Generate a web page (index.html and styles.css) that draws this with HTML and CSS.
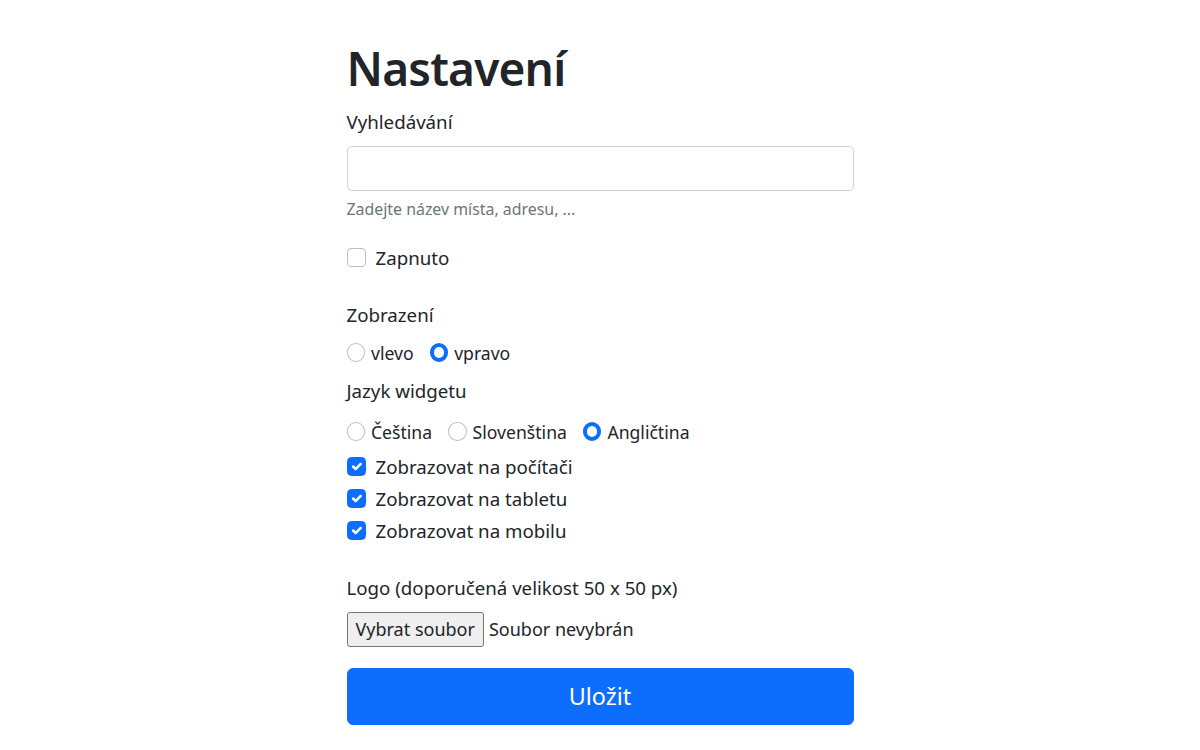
FILE: index.html
```html
<!DOCTYPE html>
<html lang="cs">
<head>
  <meta charset="utf-8">
  <title>Nastavení</title>
  <link rel="stylesheet" href="styles.css">
</head>
<body>
  <div class="container">
    <h1>Nastavení</h1>

    <form class="settings">
      <div class="search">
        <label class="form-label" for="search-input">Vyhledávání</label>
        <input class="form-control" type="text" id="search-input">
        <div class="form-text">Zadejte název místa, adresu, ...</div>
      </div>

      <div class="check-row enabled">
        <span class="check-box"></span>
        <span class="check-label">Zapnuto</span>
      </div>

      <div class="form-label display-label">Zobrazení</div>
      <div class="radio-row">
        <span class="radio-item"><span class="radio"></span>vlevo</span>
        <span class="radio-item"><span class="radio checked"></span>vpravo</span>
      </div>

      <div class="form-label lang-label">Jazyk widgetu</div>
      <div class="radio-row lang-row">
        <span class="radio-item"><span class="radio"></span>Čeština</span>
        <span class="radio-item"><span class="radio"></span>Slovenština</span>
        <span class="radio-item"><span class="radio checked"></span>Angličtina</span>
      </div>

      <div class="devices">
        <div class="check-row">
          <span class="check-box checked">
            <svg viewBox="0 0 20 20"><path d="M6 10l3 3l6-6"/></svg>
          </span>
          <span class="check-label">Zobrazovat na počítači</span>
        </div>
        <div class="check-row">
          <span class="check-box checked">
            <svg viewBox="0 0 20 20"><path d="M6 10l3 3l6-6"/></svg>
          </span>
          <span class="check-label">Zobrazovat na tabletu</span>
        </div>
        <div class="check-row">
          <span class="check-box checked">
            <svg viewBox="0 0 20 20"><path d="M6 10l3 3l6-6"/></svg>
          </span>
          <span class="check-label">Zobrazovat na mobilu</span>
        </div>
      </div>

      <div class="form-label logo-label">Logo (doporučená velikost 50 x 50 px)</div>
      <div class="file-row">
        <button type="button" class="file-button">Vybrat soubor</button>
        <span class="file-name">Soubor nevybrán</span>
      </div>

      <button type="button" class="btn-save">Uložit</button>
    </form>
  </div>
</body>
</html>
```

FILE: styles.css
```css
body {
  margin: 0;
  font-family: "Segoe UI", "Noto Sans", sans-serif;
  font-size: 18.7px;
  line-height: 28px;
  color: #212529;
  background-color: #fff;
}

.container {
  width: 507px;
  margin: 0 auto;
  padding-top: 40px;
}

h1 {
  font-size: 46px;
  font-weight: 600;
  letter-spacing: -0.8px;
  line-height: 56px;
  margin: 0 0 12px;
}

.form-label {
  display: block;
  margin-bottom: 10px;
}

.form-control {
  display: block;
  box-sizing: border-box;
  width: 100%;
  height: 45px;
  padding: 7px 14px;
  font: inherit;
  border: 1px solid #ced4da;
  border-radius: 5px;
  margin: 0;
}

.form-text {
  margin-top: 6px;
  font-size: 15.9px;
  line-height: 24.6px;
  color: #6c757d;
}

/* checkboxes */

.check-row {
  display: flex;
  align-items: center;
  gap: 10px;
  margin-bottom: 4px;
}

.check-row.enabled {
  margin-top: 22px;
  margin-bottom: 0;
}

.check-box {
  flex: none;
  box-sizing: border-box;
  width: 19px;
  height: 19px;
  border: 1px solid rgba(0, 0, 0, 0.25);
  border-radius: 4.5px;
  background-color: #fff;
}

.check-box.checked {
  background-color: #0d6efd;
  border-color: #0d6efd;
}

.check-box svg {
  display: block;
  width: 100%;
  height: 100%;
  fill: none;
  stroke: #fff;
  stroke-width: 3;
  stroke-linecap: round;
  stroke-linejoin: round;
}

/* radios */

.display-label {
  margin-top: 29px;
  margin-bottom: 10px;
}

.lang-label {
  margin-top: 10px;
  margin-bottom: 13px;
}

.radio-row {
  display: flex;
  gap: 16px;
  font-size: 17.6px;
}

.radio-item {
  display: flex;
  align-items: center;
  gap: 6px;
}

.radio {
  box-sizing: border-box;
  width: 18.5px;
  height: 18.5px;
  border: 1px solid rgba(0, 0, 0, 0.25);
  border-radius: 50%;
  background-color: #fff;
}

.radio.checked {
  border: 4.75px solid #0d6efd;
}

.devices {
  margin-top: 7px;
}

/* logo upload */

.logo-label {
  margin-top: 29px;
  margin-bottom: 10px;
}

.file-row {
  display: flex;
  align-items: center;
  gap: 5px;
  font-size: 18px;
}

.file-button {
  box-sizing: border-box;
  height: 35px;
  padding: 0 8px;
  font: inherit;
  color: #212529;
  background-color: #efefef;
  border: 1px solid #767676;
  border-radius: 3px;
}

.btn-save {
  display: block;
  width: 100%;
  height: 57px;
  margin-top: 21px;
  font-family: inherit;
  font-size: 23.4px;
  color: #fff;
  background-color: #0d6efd;
  border: 1px solid #0d6efd;
  border-radius: 6px;
}
```
